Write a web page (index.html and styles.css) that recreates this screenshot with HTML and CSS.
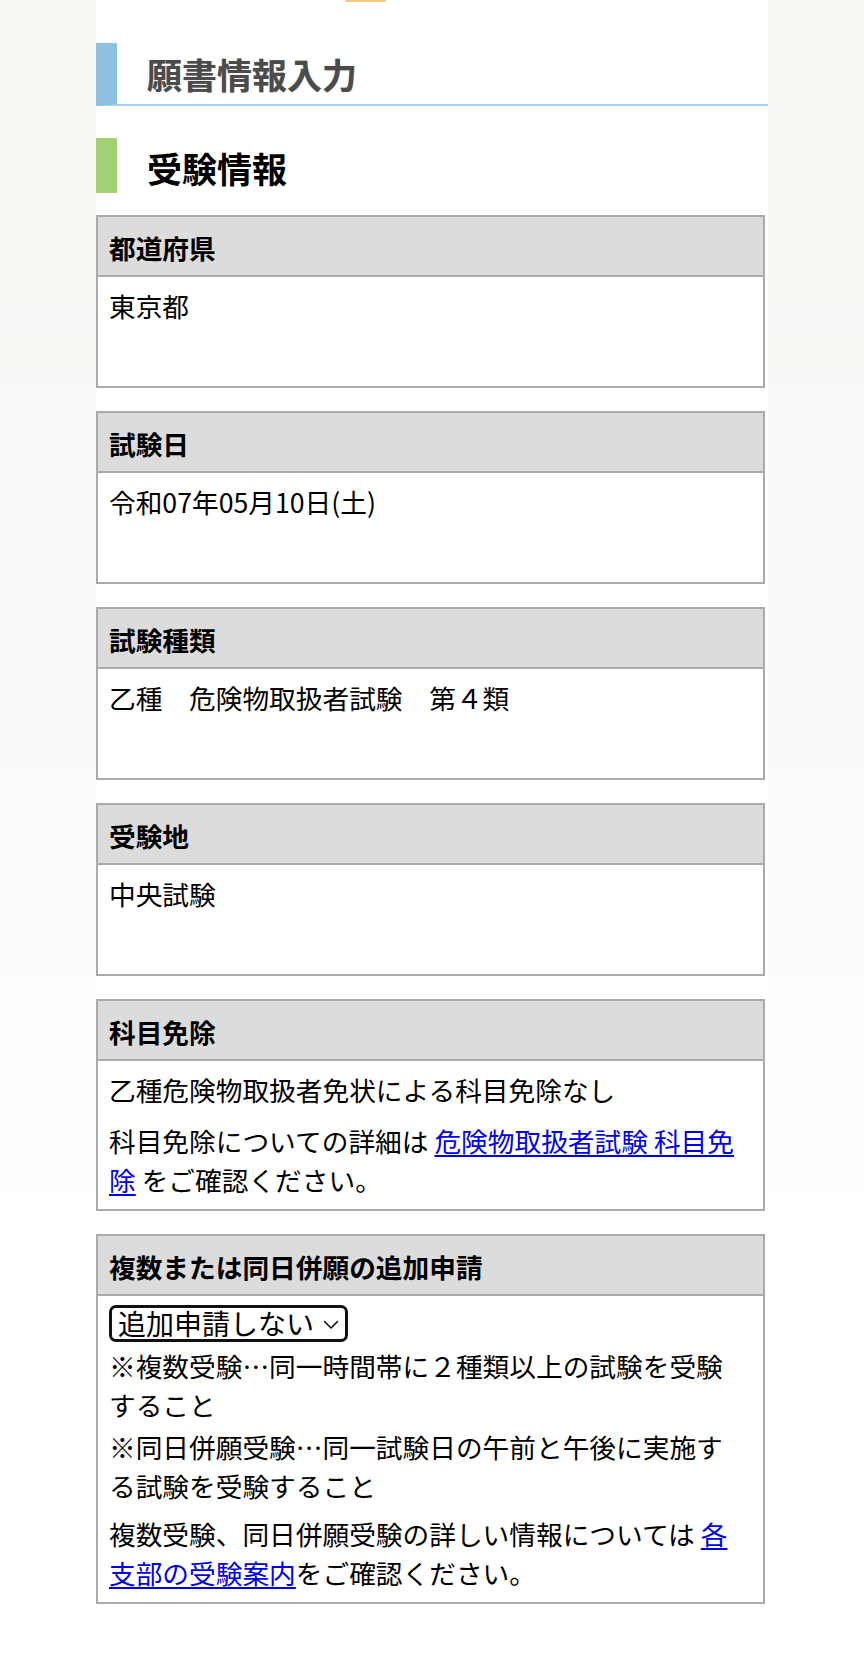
FILE: index.html
```html
<!DOCTYPE html>
<html lang="ja">
<head>
<meta charset="utf-8">
<title>願書情報入力</title>
<link rel="stylesheet" href="styles.css">
</head>
<body>
<div class="page">
  <div class="top-accent"></div>

  <h1 class="title-main">願書情報入力</h1>
  <h2 class="title-sub">受験情報</h2>

  <section class="card">
    <div class="card-head">都道府県</div>
    <div class="card-body">東京都</div>
  </section>

  <section class="card">
    <div class="card-head">試験日</div>
    <div class="card-body">令和07年05月10日(土)</div>
  </section>

  <section class="card">
    <div class="card-head">試験種類</div>
    <div class="card-body">乙種　危険物取扱者試験　第４類</div>
  </section>

  <section class="card">
    <div class="card-head">受験地</div>
    <div class="card-body">中央試験</div>
  </section>

  <section class="card">
    <div class="card-head">科目免除</div>
    <div class="card-body card-body-auto">
      <p class="para">乙種危険物取扱者免状による科目免除なし</p>
      <p class="para para-gap">科目免除についての詳細は <a href="#" class="link">危険物取扱者試験 科目免除</a> をご確認ください。</p>
    </div>
  </section>

  <section class="card">
    <div class="card-head">複数または同日併願の追加申請</div>
    <div class="card-body card-body-auto">
      <span class="select-wrap">
        <select class="select">
          <option>追加申請しない</option>
          <option>追加申請する</option>
        </select>
        <svg class="chev" width="16" height="10" viewBox="0 0 16 10" aria-hidden="true"><path d="M1.5 1.5 L8 8 L14.5 1.5" fill="none" stroke="#111" stroke-width="1.6" stroke-linecap="round" stroke-linejoin="round"/></svg>
      </span>
      <p class="para para-note-first">※複数受験…同一時間帯に２種類以上の試験を受験すること</p>
      <p class="para para-note">※同日併願受験…同一試験日の午前と午後に実施する試験を受験すること</p>
      <p class="para para-gap-small">複数受験、同日併願受験の詳しい情報については <a href="#" class="link">各支部の受験案内</a>をご確認ください。</p>
    </div>
  </section>
</div>
</body>
</html>
```

FILE: styles.css
```css
html, body {
  margin: 0;
  padding: 0;
}

body {
  min-height: 1668px;
  background: linear-gradient(to bottom, #f7f6f3 0%, #fbfaf9 45%, #ffffff 75%);
  font-family: "Noto Sans CJK JP", "Noto Sans", sans-serif;
  color: #000;
}

.page {
  width: 672px;
  margin: 0 auto;
  min-height: 1668px;
  background: #fff;
  display: flex;
  flex-direction: column;
}

.top-accent {
  width: 41px;
  height: 2px;
  margin-left: 249px;
  background: #f7c47e;
  border-radius: 0 0 3px 3px;
}

.title-main {
  margin: 41px 0 0;
  height: 61px;
  box-sizing: content-box;
  padding: 0 0 0 30px;
  border-left: 21px solid #8ec1e1;
  border-bottom: 2px solid #a6cdea;
  font-size: 35px;
  line-height: 40px;
  font-weight: 700;
  color: #4b4b4b;
  text-shadow: 0 0 1px rgba(60, 60, 60, 0.45);
  display: flex;
  align-items: center;
}

.title-sub {
  margin: 32px 0 22px;
  height: 55px;
  padding: 10px 0 5px 30px;
  box-sizing: border-box;
  border-left: 21px solid #a2d273;
  font-size: 35px;
  line-height: 40px;
  font-weight: 700;
  color: #000;
}

.card {
  width: 669px;
  box-sizing: border-box;
  border: 2px solid #aaaaaa;
  margin-bottom: 23px;
  font-size: 26.7px;
  line-height: 39px;
}

.card-head {
  background: #dcdcdc;
  border-bottom: 2px solid #aaaaaa;
  padding: 11px 11px 8px;
  font-weight: 700;
}

.card-body {
  box-sizing: border-box;
  min-height: 109px;
  padding: 9px 20px 10px 11px;
}

.card-body-auto {
  min-height: 0;
}

.para {
  margin: 0;
}

.para-gap {
  margin-top: 12px;
}

.para-gap-small {
  margin-top: 9px;
}

.para-note-first {
  margin-top: 2px;
}

.para-note {
  margin-top: 3px;
}

.link {
  color: #0000ee;
  text-decoration: underline;
  text-underline-offset: 3px;
}

.select-wrap {
  position: relative;
  display: inline-block;
  vertical-align: top;
}

.select {
  appearance: none;
  -webkit-appearance: none;
  display: block;
  box-sizing: border-box;
  width: 239px;
  height: 37px;
  margin: 0;
  padding: 0 30px 0 6px;
  border: 3px solid #111;
  border-radius: 7px;
  background: #fff;
  color: #000;
  font-family: "Noto Sans CJK JP", "Noto Sans", sans-serif;
  font-size: 28px;
  line-height: 31px;
}

.chev {
  position: absolute;
  right: 9px;
  top: 15px;
  pointer-events: none;
}
```
